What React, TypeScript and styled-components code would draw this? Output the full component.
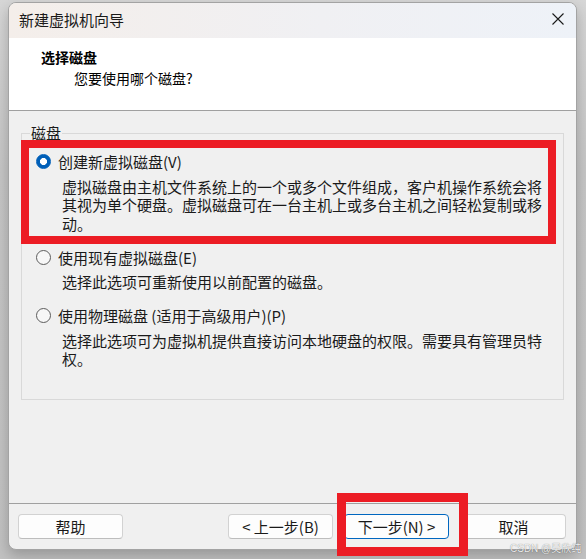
import styled, { createGlobalStyle } from 'styled-components'

const GlobalStyle = createGlobalStyle`
  html, body { margin: 0; padding: 0; }
  body {
    background: #c9c9c9;
    font-family: "Noto Sans CJK SC", "Microsoft YaHei", sans-serif;
    color: #1a1a1a;
  }
`

const Screen = styled.div`
  position: relative;
  width: 586px;
  height: 559px;
  overflow: hidden;
  box-sizing: border-box;
  padding: 2px 0 0 8px;
  background: linear-gradient(180deg, #d6d6d6 0%, #c6c6c6 30%, #c2c2c2 100%);
`

const Window = styled.div`
  width: 569px;
  height: 548px;
  box-sizing: border-box;
  border: 1px solid #a3a3a3;
  border-radius: 8px;
  overflow: hidden;
  display: flex;
  flex-direction: column;
  background: #f0f0f0;
  box-shadow: 0 6px 14px rgba(0, 0, 0, 0.22);
`

const TitleBar = styled.div`
  flex: none;
  height: 35px;
  box-sizing: border-box;
  padding: 0 12px 3px 10px;
  display: flex;
  align-items: center;
  justify-content: space-between;
  background: linear-gradient(90deg, #f4eeea 0%, #f0f0f3 55%, #eef2f8 100%);
  font-size: 15px;
  color: #1a1a1a;
`

const CloseIcon = () => (
  <svg width="12" height="12" viewBox="0 0 12 12">
    <path d="M0.5 0.5 L11.5 11.5 M11.5 0.5 L0.5 11.5" stroke="#1a1a1a" strokeWidth="1.1" fill="none" />
  </svg>
)

const Header = styled.div`
  flex: none;
  height: 73px;
  box-sizing: border-box;
  background: #ffffff;
  border-bottom: 1px solid #a0a0a0;
  padding-left: 32px;
  padding-top: 9px;
`

const HeaderTitle = styled.div`
  font-size: 14px;
  font-weight: 700;
  line-height: 20px;
  color: #000;
`

const HeaderSub = styled.div`
  margin: 2px 0 0 33px;
  font-size: 14px;
  line-height: 18px;
  color: #000;
`

const Body = styled.div`
  flex: 1;
  padding: 13px 12px 0 12px;
`

const GroupBox = styled.fieldset`
  margin: 0;
  height: 276px;
  box-sizing: border-box;
  border: 1px solid #d9d9d9;
  padding: 10px 10px 0 14px;
  display: flex;
  flex-direction: column;
  gap: 15px;
`

const Legend = styled.legend`
  margin-left: -6px;
  padding: 0 1px;
  font-size: 15px;
  line-height: 18.5px;
`

const Option = styled.div``

const Row = styled.label`
  display: flex;
  align-items: center;
  height: 18.5px;
  font-size: 15px;
`

const Radio = styled.span<{ $checked?: boolean }>`
  flex: none;
  width: 15px;
  height: 15px;
  box-sizing: border-box;
  border-radius: 50%;
  margin-right: 7px;
  border: 1px solid ${({ $checked }) => ($checked ? '#005fb8' : '#5c5c5c')};
  background: ${({ $checked }) =>
    $checked ? 'radial-gradient(circle, #ffffff 0 3.2px, #005fb8 3.8px)' : '#f7f7f7'};
`

const Desc = styled.p`
  margin: 6.5px 0 0 26px;
  width: 484px;
  font-size: 15px;
  line-height: 18.5px;
`

const Footer = styled.div`
  flex: none;
  height: 46px;
  box-sizing: border-box;
  border-top: 1px solid #a0a0a0;
  padding: 10px 10px 0 9px;
  display: flex;
  align-items: flex-start;
`

const Button = styled.button<{ $primary?: boolean; $gap?: number }>`
  width: 105px;
  height: 25px;
  margin-left: ${({ $gap }) => $gap ?? 0}px;
  padding: 0;
  border-radius: 4px;
  border: 1px solid ${({ $primary }) => ($primary ? '#0067c0' : '#d2d2d2')};
  border-bottom-color: ${({ $primary }) => ($primary ? '#0067c0' : '#bdbdbd')};
  background: #fdfdfd;
  font-family: "Noto Sans CJK SC", "Microsoft YaHei", sans-serif;
  font-size: 15px;
  line-height: 22px;
  color: #1a1a1a;
`

const Spacer = styled.div`
  flex: 1;
`

const Highlight = styled.div<{ $x: number; $y: number; $w: number; $h: number; $b: number }>`
  position: absolute;
  left: ${({ $x }) => $x}px;
  top: ${({ $y }) => $y}px;
  width: ${({ $w }) => $w}px;
  height: ${({ $h }) => $h}px;
  box-sizing: border-box;
  border: ${({ $b }) => $b}px solid #ec1c24;
  pointer-events: none;
`

const Watermark = styled.div`
  position: absolute;
  left: 510px;
  top: 542px;
  white-space: nowrap;
  font-family: "Liberation Sans", "Noto Sans CJK SC", sans-serif;
  font-size: 10px;
  line-height: 13px;
  color: rgba(255, 255, 255, 0.9);
  text-shadow: 0 0 1px rgba(0, 0, 0, 0.55);
`

export default function App() {
  return (
    <Screen>
      <GlobalStyle />
      <Window>
        <TitleBar>
          <span>新建虚拟机向导</span>
          <CloseIcon />
        </TitleBar>
        <Header>
          <HeaderTitle>选择磁盘</HeaderTitle>
          <HeaderSub>您要使用哪个磁盘?</HeaderSub>
        </Header>
        <Body>
          <GroupBox>
            <Legend>磁盘</Legend>
            <Option>
              <Row>
                <Radio $checked />
                创建新虚拟磁盘(V)
              </Row>
              <Desc>
                虚拟磁盘由主机文件系统上的一个或多个文件组成，客户机操作系统会将其视为单个硬盘。虚拟磁盘可在一台主机上或多台主机之间轻松复制或移动。
              </Desc>
            </Option>
            <Option>
              <Row>
                <Radio />
                使用现有虚拟磁盘(E)
              </Row>
              <Desc>选择此选项可重新使用以前配置的磁盘。</Desc>
            </Option>
            <Option>
              <Row>
                <Radio />
                使用物理磁盘 (适用于高级用户)(P)
              </Row>
              <Desc>选择此选项可为虚拟机提供直接访问本地硬盘的权限。需要具有管理员特权。</Desc>
            </Option>
          </GroupBox>
        </Body>
        <Footer>
          <Button>帮助</Button>
          <Spacer />
          <Button>&lt; 上一步(B)</Button>
          <Button $primary $gap={11}>
            下一步(N) &gt;
          </Button>
          <Button $gap={12}>取消</Button>
        </Footer>
      </Window>
      <Highlight $x={21} $y={140} $w={535} $h={104} $b={8} />
      <Highlight $x={337} $y={493} $w={131} $h={63} $b={9} />
      <Watermark>CSDN @吴欣纯</Watermark>
    </Screen>
  )
}
